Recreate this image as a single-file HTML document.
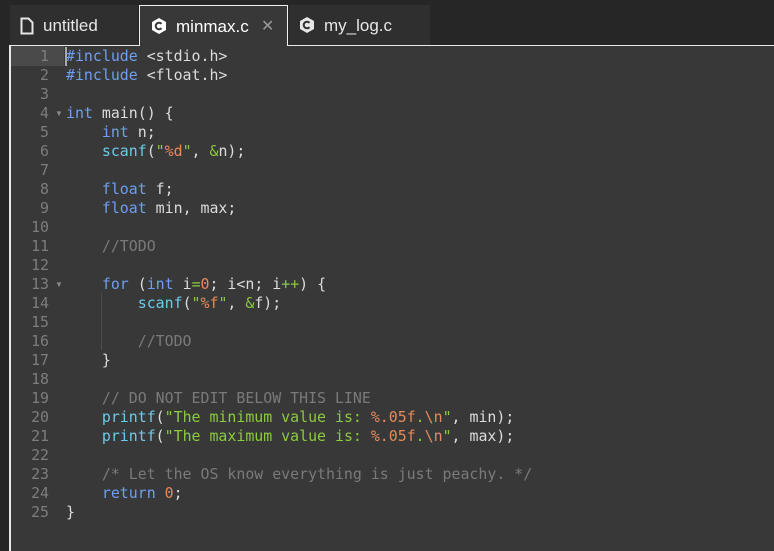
<!DOCTYPE html>
<html><head><style>
*{margin:0;padding:0;box-sizing:border-box}
body{width:774px;height:551px;background:#262626;position:relative;overflow:hidden;font-family:"Liberation Sans",sans-serif}
.tab{position:absolute;top:5px;height:40px;color:#e6e6e6;font-size:17px;line-height:42px}
.t1{left:10px;width:128px;background:#2f2f2f}
.t2{left:139px;width:149px;height:41px;background:#383838;border:1px solid #f0f0f0;border-bottom:none;color:#fff;z-index:2}
.t3{left:289px;width:141px;background:#2f2f2f}
.tab svg{position:absolute;top:12px}
.tab span{position:absolute}
#ed{position:absolute;left:9px;top:45px;width:765px;height:506px;background:#383838;border-left:2px solid #e8e8e8;border-top:1px solid #e8e8e8}
pre{position:absolute;left:55px;top:1px;font-family:"DejaVu Sans Mono","Liberation Mono",monospace;font-size:14.9px;line-height:19px;color:#dcdcdc}
.ln{position:absolute;left:0;top:1px;width:38px;text-align:right;font-family:"DejaVu Sans Mono",monospace;font-size:14.9px;line-height:19px;color:#7d7d7d}
.hl{position:absolute;left:0;top:0;width:53px;height:20px;background:#4a4a4a}
.cur{position:absolute;left:54px;top:1px;width:2px;height:19px;background:#aaa}
.k{color:#6e9ff5}.f{color:#6ccbea}.s{color:#8ccb3e}.n{color:#e8895a}.c{color:#7a7a7a}
.g{position:absolute;left:90px;top:247px;width:1px;height:57px;background:#4c4c4c}
.fa{position:absolute;left:44px;font-size:8px;color:#888}
</style></head><body>
<div class="tab t1"><svg style="left:10px" width="14" height="18" viewBox="0 0 14 18"><path d="M1.5 1.5h7l4 4v11h-11z" fill="none" stroke="#e6e6e6" stroke-width="2"/></svg><span style="left:33px">untitled</span></div>
<div class="tab t2"><svg style="left:10px;top:11px" width="18" height="18" viewBox="0 0 18 18"><path d="M9 1l7 4v8l-7 4-7-4V5z" fill="#fff"/><path d="M11.5 6.8a3.3 3.3 0 1 0 0 4.4" fill="none" stroke="#383838" stroke-width="2"/></svg><span style="left:36px">minmax.c</span><span style="left:121px;color:#999;font-size:16px">✕</span></div>
<div class="tab t3"><svg style="left:9px;top:11px" width="18" height="18" viewBox="0 0 18 18"><path d="M9 1l7 4v8l-7 4-7-4V5z" fill="#e6e6e6"/><path d="M11.5 6.8a3.3 3.3 0 1 0 0 4.4" fill="none" stroke="#2f2f2f" stroke-width="2"/></svg><span style="left:35px">my_log.c</span></div>
<div id="ed">
<div class="hl"></div><div class="cur"></div>
<div class="ln">1<br>2<br>3<br>4<br>5<br>6<br>7<br>8<br>9<br>10<br>11<br>12<br>13<br>14<br>15<br>16<br>17<br>18<br>19<br>20<br>21<br>22<br>23<br>24<br>25</div>
<div class="fa" style="top:63px">▼</div><div class="fa" style="top:234px">▼</div>
<div class="g"></div>
<pre><span class="k">#include</span> &lt;stdio.h&gt;
<span class="k">#include</span> &lt;float.h&gt;

<span class="k">int</span> main() {
    <span class="k">int</span> n;
    <span class="f">scanf</span>(<span class="s">"<span class="n">%d</span>"</span>, <span class="s">&amp;</span>n);

    <span class="k">float</span> f;
    <span class="k">float</span> min, max;

    <span class="c">//TODO</span>

    <span class="k">for</span> (<span class="k">int</span> i<span class="s">=</span><span class="n">0</span>; i&lt;n; i<span class="s">++</span>) {
        <span class="f">scanf</span>(<span class="s">"<span class="n">%f</span>"</span>, <span class="s">&amp;</span>f);

        <span class="c">//TODO</span>
    }

    <span class="c">// DO NOT EDIT BELOW THIS LINE</span>
    <span class="f">printf</span>(<span class="s">"The minimum value is: <span class="n">%.05f</span>.<span class="n">\n</span>"</span>, min);
    <span class="f">printf</span>(<span class="s">"The maximum value is: <span class="n">%.05f</span>.<span class="n">\n</span>"</span>, max);

    <span class="c">/* Let the OS know everything is just peachy. */</span>
    <span class="k">return</span> <span class="n">0</span>;
}</pre>
</div>
</body></html>
